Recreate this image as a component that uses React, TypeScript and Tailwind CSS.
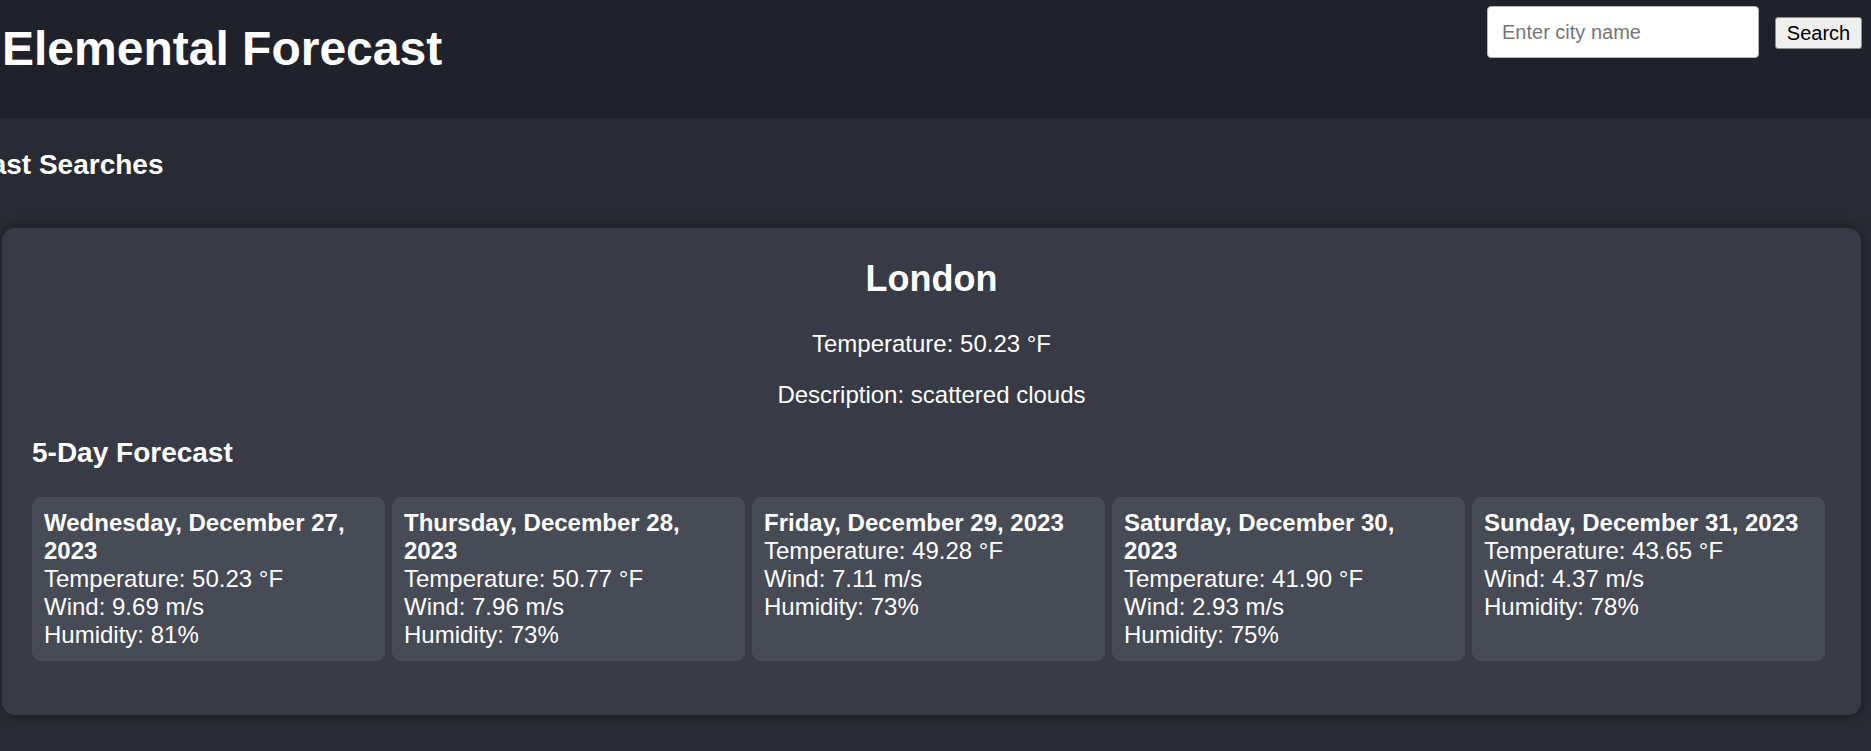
import React, { useState } from 'react';

interface DayForecast {
  date: string;
  temp: string;
  wind: string;
  humidity: string;
}

const forecast: DayForecast[] = [
  { date: 'Wednesday, December 27, 2023', temp: '50.23', wind: '9.69', humidity: '81' },
  { date: 'Thursday, December 28, 2023', temp: '50.77', wind: '7.96', humidity: '73' },
  { date: 'Friday, December 29, 2023', temp: '49.28', wind: '7.11', humidity: '73' },
  { date: 'Saturday, December 30, 2023', temp: '41.90', wind: '2.93', humidity: '75' },
  { date: 'Sunday, December 31, 2023', temp: '43.65', wind: '4.37', humidity: '78' },
];

function ForecastCard({ day }: { day: DayForecast }) {
  return (
    <div className="w-[353px] shrink-0 rounded-[9px] bg-[#474b55] px-[12px] pt-[12px] pb-[12px] text-[24px] leading-[28px]">
      <p className="font-bold">{day.date}</p>
      <p>Temperature: {day.temp} °F</p>
      <p>Wind: {day.wind} m/s</p>
      <p>Humidity: {day.humidity}%</p>
    </div>
  );
}

export default function App() {
  const [city, setCity] = useState('');

  return (
    <div className="min-h-screen overflow-hidden bg-[#282b33] text-white font-['Liberation_Sans',Arial,sans-serif]">
      <header className="flex h-[118px] items-start justify-between bg-[#1f222a]">
        <h1 className="mt-[21px] pl-[2px] text-[48px] font-bold leading-[1.15]">Elemental Forecast</h1>
        <form
          onSubmit={(e) => e.preventDefault()}
          className="mt-[6px] mr-[9px] flex items-center gap-[16px]"
        >
          <input
            type="text"
            value={city}
            onChange={(e) => setCity(e.target.value)}
            placeholder="Enter city name"
            className="h-[52px] w-[272px] rounded-[4px] border border-[#b5b5b5] bg-white px-[14px] text-[20px] text-black placeholder:text-[#757575] focus:outline-none"
          />
          <button
            type="submit"
            className="mt-[2px] h-[32px] w-[87px] rounded-[3px] border border-[#8f8f8f] bg-[#efefef] text-[20px] leading-none text-black"
          >
            Search
          </button>
        </form>
      </header>

      <main>
        <h3 className="ml-[-28px] mt-[31px] text-[28px] font-bold leading-[1.15]">Past Searches</h3>

        <section className="ml-[2px] mt-[47px] w-[1859px] rounded-[13px] bg-[#383b45] px-[30px] pt-[30px] pb-[54px] shadow-[0_0_14px_rgba(0,0,0,0.35)]">
          <h2 className="text-center text-[36px] font-bold leading-[1.15]">London</h2>
          <p className="mt-[30px] text-center text-[24px] leading-[1.15]">Temperature: 50.23 °F</p>
          <p className="mt-[24px] text-center text-[24px] leading-[1.15]">Description: scattered clouds</p>
          <h3 className="mt-[28px] text-[28px] font-bold leading-[1.15]">5-Day Forecast</h3>
          <div className="mt-[28px] flex gap-[7px]">
            {forecast.map((day) => (
              <ForecastCard key={day.date} day={day} />
            ))}
          </div>
        </section>
      </main>
    </div>
  );
}
